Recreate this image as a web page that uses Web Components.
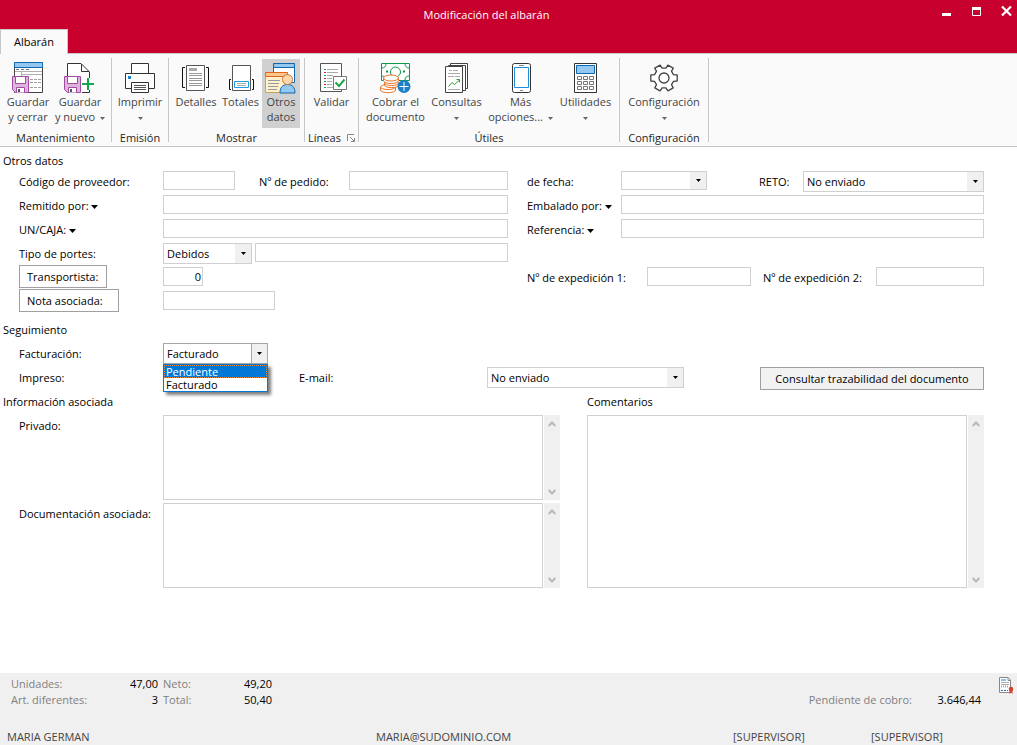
<!DOCTYPE html>
<html lang="es">
<head>
<meta charset="utf-8">
<title>Modificación del albarán</title>
<style>
  body { margin: 0; font: 11px/16px "Open Sans", "Noto Sans", sans-serif; color: #000; background: #fff; }
</style>
</head>
<body>
<delivery-window></delivery-window>

<script>
const DOWN = (fill = '#000', cls = 'caret') =>
  `<svg class="${cls}" width="7" height="4" viewBox="0 0 7 4" aria-hidden="true"><path d="M0 0H7L3.5 4Z" fill="${fill}"/></svg>`;

const gearPath = () => {
  const pts = [];
  for (let i = 0; i < 6; i++) {
    const a = i * 60;
    for (const [r, d] of [[10, -19], [13.5, -13], [13.5, 13], [10, 19]]) {
      const t = (a + d) * Math.PI / 180;
      pts.push((16 + r * Math.cos(t)).toFixed(1) + ' ' + (16 + r * Math.sin(t)).toFixed(1));
    }
  }
  return 'M' + pts.join('L') + 'Z';
};

const DISK = `<path d="M.5 14.5H16.5V30.5H3.5L.5 27.5Z" fill="#dcb4dc" stroke="#a24aa2"/>
  <path d="M3.5 14.5H13.5V21.5H3.5Z" fill="#fff" stroke="#a24aa2"/>
  <path d="M4.5 30.5V25.5H12.5V30.5" fill="#fff" stroke="#a24aa2"/><path d="M6 27h2v3H6z" fill="#555"/>`;

const ICONS = {
  saveClose: `<path d="M2.5 .5H30.5V30.5H2.5Z" fill="#fff" stroke="#444"/>
    <path d="M2.5 .5H30.5V5.5H2.5Z" fill="#94c8ef" stroke="#1068b0"/>
    <path d="M4 7.500H7M9 7.500H12M14 7.500H17" stroke="#777"/><path d="M3 9.500H30M9.500 12.500H30M9.500 10V14" stroke="#b0b0b0" fill="none"/>
    <path d="M18 17.500H29M18 20.500H29M18 25.500H29" stroke="#a0a0a0" stroke-dasharray="3 1"/>${DISK}`,
  saveNew: `<path d="M3.500 14V1.500H17L25.500 10V30.500H3.500Z" fill="#fff"/><path d="M3.500 14V1.500H17L25.500 10V16M18 30.500H25.500V28" fill="none" stroke="#333"/><path d="M17.500 2V9.500H25" fill="none" stroke="#333"/>
    ${DISK}<path d="M24 16V28M18 22H30" stroke="#12a84c" stroke-width="2"/>`,
  print: `<path d="M7.500 1.500H24.500V12H7.500Z" fill="#fff" stroke="#333"/><path d="M1.500 11.500H30.500V26.500H1.500Z" fill="#fff" stroke="#333"/>
    <path d="M4 14h3v3H4z" fill="#1787d0"/><path d="M7.500 20.500H24.500V30.500H7.500Z" fill="#fff" stroke="#333"/>
    <path d="M10 23.500H22M10 25.500H22M10 27.500H22" stroke="#555"/>`,
  details: `<path d="M6.500 3.500H24.500V28.500H6.500Z" fill="#fff" stroke="#555"/><path d="M5 5.500H2.500V25.500H5M26 5.500H28.500V25.500H26" fill="none" stroke="#111"/>
    <path d="M9 6h8v3H9z" fill="#aaa"/><path d="M9 11.500H22M9 13.500H22M9 16.500H22M9 18.500H22M9 21.500H22M9 23.500H22" stroke="#999"/>`,
  totals: `<path d="M7.500 3.500H25.500V28.500H7.500Z" fill="#fff" stroke="#555"/><path d="M6 17.500H4.500V27.500H6M27 17.500H28.500V27.500H27" fill="none" stroke="#111"/>
    <path d="M9.500 19.500H23.500V25.500H9.500Z" fill="#fff" stroke="#1c9be0"/><path d="M12 21.500H21M12 23.500H21" stroke="#aaa"/>`,
  other: `<path d="M8.500 1.500H29.500V20.500H8.500Z" fill="#fff" stroke="#1068b0"/><path d="M8.500 1.500H29.500V5.500H8.500Z" fill="#94c8ef" stroke="#1068b0"/>
    <path d="M.5 10.500H22.500V30.500H.5Z" fill="#fff0cc" stroke="#caa25c"/><path d="M.5 10.500H22.500V14.500H.5Z" fill="#fbc58e" stroke="#e0661a"/>
    <path d="M3 18.500H15M3 21.500H14M3 24.500H13M3 27.500H12" stroke="#999"/>
    <path d="M15 31C15 25 18 22.500 22.500 22.500S30 25 30 31Z" fill="#94c8ef" stroke="#1068b0"/><circle cx="22.500" cy="17.500" r="5" fill="#fcd7ac" stroke="#d0783a"/>`,
  validate: `<path d="M4.500 1.500H25.500V29.500H4.500Z" fill="#fff" stroke="#555"/><path d="M11 7.500H22M11 10.500H22M11 13.500H17M11 16.500H16M11 19.500H16M11 22.500H16M11 25.500H22" stroke="#aaa"/>
    <path d="M8 7h2v1H8zM8 13h2v1H8zM8 19h2v1H8zM8 25h2v1H8z" fill="#12a84c"/><path d="M8 10h2v1H8zM8 16h2v1H8zM8 22h2v1H8z" fill="#d02040"/>
    <path d="M17.500 14.500H30.500V27.500H17.500Z" fill="#fff" stroke="#777"/><path d="M19.500 20.500L23 24L28.500 17.500" fill="none" stroke="#1fa64d" stroke-width="2"/>`,
  cash: `<path d="M1.500 1.500H29.500V18.500H1.500Z" fill="#fff" stroke="#12964a"/><path d="M1.500 6Q6 6 6 1.500M29.500 6Q25 6 25 1.500M1.500 14Q6 14 6 18M29.500 14Q25 14 25 18" fill="none" stroke="#12964a"/>
    <circle cx="15.500" cy="10" r="5" fill="#fff" stroke="#12964a"/><path d="M6 8.500h2v2H6zM23 8.500h2v2h-2z" fill="#12964a"/>
    <g fill="#fff" stroke="#e8762c"><path d="M.5 25v3c0 3.500 15 3.500 15 0v-3"/><ellipse cx="8" cy="25" rx="7.500" ry="2.500"/><path d="M4.500 21v2c0 3.500 14 3.500 14 0v-2"/><ellipse cx="11.500" cy="21" rx="7" ry="2.500"/><path d="M3.500 16v2.500c0 4 15 4 15 0v-2.500"/><ellipse cx="11" cy="16" rx="7.500" ry="3"/></g>
    <circle cx="24" cy="24.500" r="6.500" fill="#1c7fc8"/><path d="M24 20V29M19.500 24.500H28.500" stroke="#fff"/>`,
  reports: `<path d="M9.500 1.500H26.500V26.500H9.500Z" fill="#fff" stroke="#444"/><path d="M7.500 3.500H24.500V28.500H7.500Z" fill="#fff" stroke="#444"/><path d="M4.500 4.500H21.500V30.500H4.500Z" fill="#fff" stroke="#444"/>
    <path d="M8 8.500H11M12 8.500H17M7 11.500H19M7 14.500H13M14 14.500H19M7 27.500H19" stroke="#aaa"/><path d="M7.500 24.500L11 20.500L13.500 22.500L18.500 18M15.500 17.500H18.500V20.500" fill="none" stroke="#2f9e3f"/>`,
  tablet: `<rect x="7.500" y="1.500" width="18" height="29" rx="2" fill="#fff" stroke="#333"/><path d="M9.500 5.500H23.500V25.500H9.500Z" fill="#fff" stroke="#1c8fd8"/><path d="M15 28.500H18M14 3.500H19" stroke="#888"/>`,
  calc: `<path d="M4.500 1.500H26.500V30.500H4.500Z" fill="#fff" stroke="#333"/><path d="M6.500 3.500H24.500V11.500H6.500Z" fill="#94c8ef" stroke="#1068b0"/>
    <path d="M7.500 14.500h4v3h-4zM13.500 14.500h4v3h-4zM19.500 14.500h4v3h-4zM7.500 19.500h4v3h-4zM13.500 19.500h4v3h-4zM19.500 19.500h4v3h-4zM7.500 24.500h4v3h-4zM13.500 24.500h4v3h-4zM19.500 24.500h4v3h-4z" fill="#fff" stroke="#777"/>`,
  gear: `<path d="${gearPath()}" fill="#fff" stroke="#444" stroke-width="1.300" stroke-linejoin="round"/><circle cx="16" cy="16" r="5" fill="#fff" stroke="#444" stroke-width="1.300"/>`
};

const define = (name, render) => customElements.define(name, class extends HTMLElement {
  connectedCallback() {
    if (this.shadowRoot) return;
    this.attachShadow({ mode: 'open' }).innerHTML = render(this);
  }
});

/* Title bar with the window controls and the ribbon tab */
define('title-bar', el => `
<style>
  :host { display: flex; flex-direction: column; height: 54px; background: #c8002d; color: #fff; }
  .top { display: flex; height: 29px; }
  h1 { flex: 1; margin: 0; padding-left: 36px; font: inherit; line-height: 30px; text-align: center; }
  nav { display: flex; gap: 11px; padding-right: 1px; align-items: flex-start; }
  .top button { width: 19px; height: 24px; margin: 0; padding: 0; border: 0; background: none; display: flex; justify-content: center; }
  .tabs { display: flex; height: 25px; }
  .tabs button { box-sizing: border-box; width: 68px; margin: 0; padding: 0 0 1px; border: 1px solid #c8c8c8; border-bottom: 0; background: #fafafa; color: #000; font: inherit; }
  .rest { flex: 1; border-bottom: 1px solid #c8c8c8; }
</style>
<div class="top"><h1>${el.getAttribute('heading')}</h1>
  <nav aria-label="Ventana">
    <button aria-label="Minimizar"><svg width="9" height="24"><path d="M0 13h9v3H0z" fill="#fff"/></svg></button>
    <button aria-label="Maximizar"><svg width="9" height="24"><path d="M.5 8V15.500H8.500V8" fill="none" stroke="#fff"/><path d="M0 7h9v3H0z" fill="#fff"/></svg></button>
    <button aria-label="Cerrar"><svg width="11" height="24"><path d="M1 6.500L10 15.500M10 6.500L1 15.500" stroke="#fff" stroke-width="2.200"/></svg></button>
  </nav></div>
<div class="tabs"><button role="tab" aria-selected="true">Albarán</button><span class="rest"></span></div>`);

define('ribbon-group', el => `
<style>
  :host { display: flex; flex-direction: column; box-sizing: border-box; height: 84px; margin-top: 4px; border-right: 1px solid #c8c8c8; flex: none; }
  .items { display: flex; height: 70px; padding-left: var(--inset, 0); }
  .name { display: flex; justify-content: center; align-items: center; gap: 6px; height: 16px; line-height: 16px; padding-top: 2px; color: #262626; }
</style>
<div class="items"><slot></slot></div>
<div class="name">${el.getAttribute('label')}${el.hasAttribute('launcher') ? `<svg width="8" height="8" viewBox="0 0 8 8"><path d="M.5 7V.5H7M3 3l4 4M7.500 4V7.500H4" fill="none" stroke="#888"/></svg>` : ''}</div>`);

define('ribbon-button', el => `
<style>
  :host { display: block; }
  button { box-sizing: border-box; width: 100%; height: 69px; margin: 1px 0 0; padding: 3px 0 0; border: 0; background: none; color: #444; font: inherit; line-height: 15px; white-space: nowrap; display: flex; flex-direction: column; align-items: center; }
  :host([selected]) button { background: #d0d0d0; }
  .icon { width: 32px; height: 32px; flex: none; }
  .caret { width: 5px; height: 3px; vertical-align: middle; margin-left: 2px; }
  .only .caret { margin: 0; }
</style>
<button>
  <svg class="icon" viewBox="0 0 32 32" aria-hidden="true">${ICONS[el.getAttribute('icon')]}</svg>
  <span>${el.getAttribute('line1')}</span>
  <span class="${el.getAttribute('line2') ? '' : 'only'}">${el.getAttribute('line2') || ''} ${el.hasAttribute('menu') ? DOWN('#666') : ''}</span>
</button>`);

define('ribbon-bar', () => `
<style>
  :host { display: flex; box-sizing: border-box; height: 93px; background: #fafafa; border-bottom: 1px solid #c6c6c6; }
</style>
<ribbon-group label="Mantenimiento" style="width:112px;--inset:2px">
  <ribbon-button style="width:52px" icon="saveClose" line1="Guardar" line2="y cerrar"></ribbon-button>
  <ribbon-button style="width:52px" icon="saveNew" line1="Guardar" line2="y nuevo" menu></ribbon-button>
</ribbon-group>
<ribbon-group label="Emisión" style="width:57px"><ribbon-button style="width:56px" icon="print" line1="Imprimir" menu></ribbon-button></ribbon-group>
<ribbon-group label="Mostrar" style="width:136px;--inset:4px">
  <ribbon-button style="width:46px" icon="details" line1="Detalles"></ribbon-button>
  <ribbon-button style="width:43px" icon="totals" line1="Totales"></ribbon-button>
  <ribbon-button style="width:38px" icon="other" line1="Otros" line2="datos" selected></ribbon-button>
</ribbon-group>
<ribbon-group label="Líneas" launcher style="width:54px"><ribbon-button style="width:53px" icon="validate" line1="Validar"></ribbon-button></ribbon-group>
<ribbon-group label="Útiles" style="width:261px;--inset:4px">
  <ribbon-button style="width:65px" icon="cash" line1="Cobrar el" line2="documento"></ribbon-button>
  <ribbon-button style="width:57px" icon="reports" line1="Consultas" menu></ribbon-button>
  <ribbon-button style="width:71px" icon="tablet" line1="Más" line2="opciones..." menu></ribbon-button>
  <ribbon-button style="width:59px" icon="calc" line1="Utilidades" menu></ribbon-button>
</ribbon-group>
<ribbon-group label="Configuración" style="width:89px"><ribbon-button style="width:88px" icon="gear" line1="Configuración" menu></ribbon-button></ribbon-group>`);

/* One label with its text box or drop-down */
define('form-field', el => {
  const label = el.getAttribute('label');
  const value = el.getAttribute('value') || '';
  const name = label || el.getAttribute('name');
  const select = el.getAttribute('type') === 'select';
  return `
<style>
  :host { display: flex; align-items: flex-start; box-sizing: border-box; height: 24px; padding-top: 2px; }
  label { flex: 0 0 var(--label-width, 144px); line-height: 22px; white-space: nowrap; }
  label .caret { vertical-align: middle; }
  .box { position: relative; flex: 1; min-width: 0; display: flex; }
  input, select { box-sizing: border-box; width: 100%; min-width: 0; height: 19px; margin: 0; padding: 0 3px; border: 1px solid #d0d0d0; border-radius: 0; background: #fff; color: #000; font: inherit; outline: 0; appearance: none; }
  select { height: var(--select-height, 21px); }
  :host([numeric]) input { text-align: right; padding-right: 1px; }
  .drop { position: absolute; right: 1px; top: 1px; bottom: 1px; width: 16px; background: #f0f0f0; display: flex; align-items: center; justify-content: center; pointer-events: none; }
  .drop .caret { width: 5px; height: 3px; }
  :host([open]) select { border-color: #a6a6a6; }
  :host([open]) .drop { width: 15px; border-left: 1px solid #a6a6a6; }
  ul { position: absolute; z-index: 2; left: 0; right: 0; top: 21px; margin: 0; padding: 0; list-style: none; background: #fff; border: 1px solid #0078d7; box-shadow: 3px 3px 3px rgba(0,0,0,.5); line-height: 13px; }
  li { padding: 0 2px; }
  li[aria-selected=true] { background: #0078d7; color: #fff; outline: 1px dotted #f08a30; outline-offset: -1px; }
</style>
${label ? `<label for="c">${label}${el.hasAttribute('menu') ? ' ' + DOWN() : ''}</label>` : ''}
<span class="box">${select
  ? `<select id="c" aria-label="${name}">${value ? `<option>${value}</option>` : ''}</select><span class="drop">${DOWN()}</span>`
  : `<input id="c" type="text" aria-label="${name}" value="${value}">`}
${el.hasAttribute('open') ? `<ul role="listbox" aria-label="${name}"><li role="option" aria-selected="true">Pendiente</li><li role="option">Facturado</li></ul>` : ''}
</span>`;
});

define('push-button', () => `
<style>
  :host { display: block; }
  button { box-sizing: border-box; width: 100%; height: 23px; margin: 0; padding: 0 7px; border: 1px solid #a0a0a0; border-radius: 0; background: var(--face, #fff); color: #000; font: inherit; text-align: var(--align, left); white-space: nowrap; }
</style>
<button><slot></slot></button>`);

/* Multi-line text with its scroll rail; the label goes to the left, or above with the "stacked" attribute */
define('memo-field', el => `
<style>
  :host { display: grid; grid-template-columns: 144px minmax(0, 1fr) 16px; grid-template-rows: 85px; }
  :host([stacked]) { grid-template-columns: minmax(0, 1fr) 16px; grid-template-rows: 21px 173px; }
  label { line-height: 22px; white-space: nowrap; }
  :host([stacked]) label { grid-column: 1 / 3; line-height: 16px; }
  textarea { box-sizing: border-box; height: 100%; margin: 0 1px 0 0; padding: 2px; border: 1px solid #d0d0d0; border-radius: 0; resize: none; outline: 0; font: inherit; display: block; }
  .rail { background: #f0f0f0; display: flex; flex-direction: column; justify-content: space-between; }
  .rail button { height: 17px; margin: 0; padding: 0; border: 0; background: none; display: flex; align-items: center; justify-content: center; }
</style>
<label for="m">${el.getAttribute('label')}</label>
<textarea id="m"></textarea>
<div class="rail">
  <button aria-label="Subir"><svg width="8" height="6" viewBox="0 0 8 6"><path d="M.7 5L4 1.500L7.300 5" fill="none" stroke="#b8b8b8" stroke-width="2"/></svg></button>
  <button aria-label="Bajar"><svg width="8" height="6" viewBox="0 0 8 6"><path d="M.7 1L4 4.500L7.300 1" fill="none" stroke="#b8b8b8" stroke-width="2"/></svg></button>
</div>`);

define('form-row', () => `
<style>
  :host { display: grid; grid-template-columns: minmax(0, 489fr) minmax(0, 476fr); height: 24px; padding: 0 33px 0 19px; }
  div { display: flex; }
  .right { padding-left: 19px; }
</style>
<div><slot></slot></div><div class="right"><slot name="right"></slot></div>`);

define('other-data', () => `
<style>
  :host { display: block; padding-top: 6px; }
  h2 { margin: 0; padding-left: 3px; font: inherit; line-height: 16px; }
  .grow { flex: 1; }
  .r { --label-width: 94px; }
  .wide { display: flex; flex: 1; }
  .key { width: 144px; flex: none; }
  .tracking { padding: 9px 0 5px; }
  .tracking h2 { padding-bottom: 3px; }
  .line { display: flex; height: 24px; padding: 0 33px 0 19px; }
  .info { display: grid; grid-template-columns: minmax(0, 557fr) minmax(0, 397fr); column-gap: 27px; padding: 0 33px 0 3px; }
  .info h2 { padding: 0 0 5px; }
  .notes { display: grid; row-gap: 3px; padding-left: 16px; }
</style>
<section>
  <h2>Otros datos</h2>
  <form-row>
    <form-field label="Código de proveedor:" style="width:216px"></form-field>
    <form-field class="grow" label="Nº de pedido:" style="--label-width:90px;margin-left:24px"></form-field>
    <div slot="right" class="wide r">
      <form-field label="de fecha:" type="select" style="width:180px;--select-height:19px"></form-field>
      <form-field class="grow" label="RETO:" type="select" value="No enviado" style="--label-width:44px;margin-left:52px"></form-field>
    </div>
  </form-row>
  <form-row>
    <form-field class="grow" label="Remitido por:" menu></form-field>
    <form-field slot="right" class="grow r" label="Embalado por:" menu></form-field>
  </form-row>
  <form-row>
    <form-field class="grow" label="UN/CAJA:" menu></form-field>
    <form-field slot="right" class="grow r" label="Referencia:" menu></form-field>
  </form-row>
  <form-row>
    <form-field label="Tipo de portes:" type="select" value="Debidos" style="width:233px"></form-field>
    <form-field class="grow" name="Detalle de portes" style="margin-left:3px"></form-field>
  </form-row>
  <form-row>
    <div class="key"><push-button style="width:88px">Transportista:</push-button></div>
    <form-field name="Transportista" value="0" numeric style="width:40px"></form-field>
    <div slot="right" class="wide">
      <form-field label="Nº de expedición 1:" style="--label-width:120px;width:224px"></form-field>
      <form-field class="grow" label="Nº de expedición 2:" style="--label-width:113px;margin-left:12px"></form-field>
    </div>
  </form-row>
  <form-row>
    <div class="key"><push-button style="width:100px">Nota asociada:</push-button></div>
    <form-field name="Nota asociada" style="width:112px"></form-field>
  </form-row>
</section>
<section class="tracking">
  <h2>Seguimiento</h2>
  <div class="line"><form-field label="Facturación:" type="select" value="Facturado" open style="width:249px"></form-field></div>
  <div class="line">
    <form-field label="Impreso:" type="select" style="width:240px"></form-field>
    <form-field label="E-mail:" type="select" value="No enviado" style="--label-width:188px;width:385px;margin-left:40px"></form-field>
    <push-button style="width:224px;margin:2px 0 0 auto;--face:#f2f2f2;--align:center">Consultar trazabilidad del documento</push-button>
  </div>
</section>
<section class="info">
  <div>
    <h2>Información asociada</h2>
    <div class="notes">
      <memo-field label="Privado:"></memo-field>
      <memo-field label="Documentación asociada:"></memo-field>
    </div>
  </div>
  <memo-field stacked label="Comentarios"></memo-field>
</section>`);

define('status-footer', () => `
<style>
  :host { display: flex; flex-direction: column; justify-content: space-between; height: 72px; background: #f0f0f0; color: #808080; }
  .totals { display: flex; align-items: flex-start; padding: 3px 3px 0 11px; }
  dl { display: grid; grid-template-columns: 107px 40px 45px 69px; margin: 0; }
  dt:nth-of-type(even) { padding-left: 5px; }
  dd { margin: 0; color: #000; text-align: right; }
  .due { grid-template-columns: auto 69px; margin-left: auto; padding-top: 16px; }
  .totals svg { margin: 1px 0 0 18px; }
  .users { display: grid; grid-template-columns: 369fr 357fr 138fr 146fr; padding-left: 7px; color: #444; }
</style>
<div class="totals">
  <dl><dt>Unidades:</dt><dd>47,00</dd><dt>Neto:</dt><dd>49,20</dd><dt>Art. diferentes:</dt><dd>3</dd><dt>Total:</dt><dd>50,40</dd></dl>
  <dl class="due"><dt>Pendiente de cobro:</dt><dd>3.646,44</dd></dl>
  <svg width="15" height="17" viewBox="0 0 15 17" role="img" aria-label="Factura">
    <path d="M.5 .5H9L11.500 3V15.500H.5Z" fill="#fff" stroke="#888"/><path d="M9 .5V3.500H12" fill="none" stroke="#888"/>
    <path d="M2 2h5v2H2z" fill="#80c4f0"/><path d="M2 5.500H10M2 7.500H10" stroke="#b0b0b0"/><path d="M2 9.500H9" stroke="#aaa" stroke-width="2" stroke-dasharray="1 1"/><path d="M2 13.500H9" stroke="#2070c0" stroke-dasharray="2 1"/>
    <circle cx="12" cy="12" r="2.300" fill="#d0442c"/><path d="M10.500 13h3v4L12 15.500L10.500 17z" fill="#d0442c"/>
  </svg>
</div>
<div class="users"><span>MARIA GERMAN</span><span>MARIA@SUDOMINIO.COM</span><span>[SUPERVISOR]</span><span>[SUPERVISOR]</span></div>`);

define('delivery-window', () => `
<style>
  :host { display: flex; flex-direction: column; min-height: 100vh; }
  other-data { flex: 1; }
</style>
<title-bar heading="Modificación del albarán"></title-bar>
<ribbon-bar></ribbon-bar>
<other-data></other-data>
<status-footer></status-footer>`);
</script>
</body>
</html>
